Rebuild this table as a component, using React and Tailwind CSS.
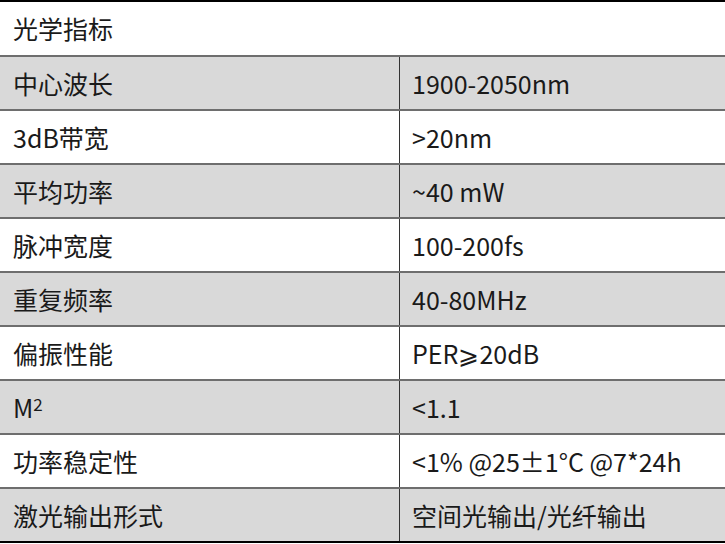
import React from 'react';

const rows = [
  ['中心波长', '1900-2050nm'],
  ['3dB带宽', '>20nm'],
  ['平均功率', '~40 mW'],
  ['脉冲宽度', '100-200fs'],
  ['重复频率', '40-80MHz'],
  ['偏振性能', 'PER⩾20dB'],
  [
    <>
      M<sup className="text-[17px] relative -top-[3px]">2</sup>
    </>,
    '<1.1',
  ],
  ['功率稳定性', '<1% @25±1°C @7*24h'],
  ['激光输出形式', '空间光输出/光纤输出'],
];

export default function App() {
  return (
    <div
      className="w-[725px] h-[544px] bg-white text-[#1a1a1a] text-[25px] leading-none"
      style={{ fontFamily: '"Noto Sans CJK SC", "Noto Sans", sans-serif' }}
    >
      <div className="h-[55px] border-t-2 border-black flex items-center pl-[13px]">光学指标</div>
      <div className="border-b-2 border-black">
        {rows.map(([label, value], i) => (
          <div
            key={i}
            className={`h-[54px] border-t-2 border-[#6e6e6e] flex ${i % 2 === 0 ? 'bg-[#d9d9d9]' : 'bg-white'}`}
          >
            <div className="w-[400px] border-r border-[#333] flex items-center pl-[13px]">{label}</div>
            <div className="flex-1 flex items-center pl-[12px]">{value}</div>
          </div>
        ))}
      </div>
    </div>
  );
}
